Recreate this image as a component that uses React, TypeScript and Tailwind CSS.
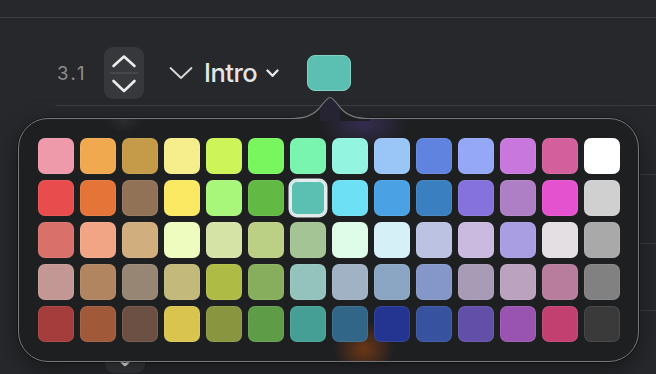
import React from 'react';

const SW: string[][] = [
  ['bg-[#ee9aaa]', 'bg-[#f0a94e]', 'bg-[#c59a48]', 'bg-[#f6ee8c]', 'bg-[#cdf55a]', 'bg-[#79f55e]', 'bg-[#7af5b0]', 'bg-[#93f5e0]', 'bg-[#99c6f7]', 'bg-[#5f83de]', 'bg-[#95a8f7]', 'bg-[#c877dd]', 'bg-[#d3609c]', 'bg-[#ffffff]'],
  ['bg-[#e84c4c]', 'bg-[#e47438]', 'bg-[#927257]', 'bg-[#fbe964]', 'bg-[#a8f67a]', 'bg-[#62b944]', 'bg-[#5bbfb2]', 'bg-[#6ee0f5]', 'bg-[#4aa2e4]', 'bg-[#3a7fbf]', 'bg-[#8672dc]', 'bg-[#ae7fc4]', 'bg-[#e552cf]', 'bg-[#d0d0d0]'],
  ['bg-[#d9706a]', 'bg-[#f2a585]', 'bg-[#d1ae7e]', 'bg-[#eefcbf]', 'bg-[#d6e3a7]', 'bg-[#bcd085]', 'bg-[#a4c496]', 'bg-[#defce8]', 'bg-[#d6f0f8]', 'bg-[#bbc2e2]', 'bg-[#cbbae0]', 'bg-[#a99ee2]', 'bg-[#e3dfe3]', 'bg-[#a9a9a9]'],
  ['bg-[#c39894]', 'bg-[#b0855f]', 'bg-[#978673]', 'bg-[#c2b97b]', 'bg-[#aebc45]', 'bg-[#86ae5c]', 'bg-[#94c3bd]', 'bg-[#a0b2c4]', 'bg-[#8ba6c3]', 'bg-[#8597c9]', 'bg-[#a79bb6]', 'bg-[#bba2bf]', 'bg-[#b87d9c]', 'bg-[#818181]'],
  ['bg-[#a43d3b]', 'bg-[#a05a3a]', 'bg-[#6c5044]', 'bg-[#d9c44f]', 'bg-[#8a953f]', 'bg-[#5e9c48]', 'bg-[#459f94]', 'bg-[#326689]', 'bg-[#233590]', 'bg-[#3753a0]', 'bg-[#6250a8]', 'bg-[#9954b2]', 'bg-[#c14070]', 'bg-[#3a3a3b]'],
];

function Stepper() {
  return (
    <div className="w-[40px] h-[52px] rounded-[9px] bg-[#36383b] shrink-0">
      <svg width="40" height="52" viewBox="0 0 40 52" fill="none">
        <polyline points="9.5,19 20,9.5 30.5,19" stroke="#ececec" strokeWidth="2.6" strokeLinecap="round" strokeLinejoin="round" />
        <line x1="6" y1="26" x2="34" y2="26" stroke="#55575b" strokeWidth="1" />
        <polyline points="9.5,34 20,44 30.5,34" stroke="#ececec" strokeWidth="2.6" strokeLinecap="round" strokeLinejoin="round" />
      </svg>
    </div>
  );
}

export default function App() {
  return (
    <div className="relative w-[656px] h-[374px] overflow-hidden bg-[#26282b] flex flex-col font-['Inter','Liberation_Sans',sans-serif]">
      <div className="h-[18px] shrink-0 border-b border-[#3a3c40]" />
      {/* header row */}
      <div className="ml-[56px] h-[88px] shrink-0 border-b border-[#3a3c40]">
        <div className="mt-[29px] h-[52px] flex items-center">
          <div className="w-[48px] pl-[1px] text-[18.5px] tracking-[2.6px] text-[#8d8e91] leading-none">3.1</div>
          <Stepper />
          <svg className="ml-[25px] shrink-0" width="24" height="14" viewBox="0 0 24 14" fill="none">
            <polyline points="1.5,2 12,12 22.5,2" stroke="#d9d9d9" strokeWidth="1.8" strokeLinecap="round" strokeLinejoin="round" />
          </svg>
          <div className="ml-[11px] w-[62px] text-[25.5px] tracking-[-0.5px] font-medium text-[#e4e4e5] leading-none">Intro</div>
          <svg className="shrink-0" width="13" height="9" viewBox="0 0 13 9" fill="none">
            <polyline points="1.5,1.5 6.5,6.8 11.5,1.5" stroke="#e6e6e6" strokeWidth="2.4" strokeLinecap="round" strokeLinejoin="round" />
          </svg>
          <div className="ml-[28px] w-[44px] h-[36px] rounded-[8px] bg-[#5bbfb1] border border-[#84d2c6]" />
        </div>
      </div>
      <div className="ml-[56px] h-[69px] shrink-0 border-b border-[#3a3c40]" />
      <div className="ml-[56px] h-[69px] shrink-0 border-b border-[#3a3c40]" />
      <div className="ml-[56px] h-[67px] shrink-0 border-b border-[#3a3c40]" />
      <div className="ml-[56px] flex-1">
        <div className="ml-[49px] mt-[10px]">
          <Stepper />
        </div>
      </div>

      {/* popover */}
      <div className="absolute left-[18px] top-[118px] w-[621px] h-[244px] rounded-[30px] border border-[#77787b] bg-[#1e1f21] shadow-[0_0_0_1px_rgba(0,0,0,0.35),0_8px_24px_rgba(0,0,0,0.4)] pl-[19px] pt-[19px]">
        <div className="absolute inset-0 rounded-[29px] overflow-hidden pointer-events-none">
          <div className="absolute left-[300px] top-[-20px] w-[90px] h-[50px] bg-[radial-gradient(ellipse_at_center,rgba(95,70,170,0.35),rgba(95,70,170,0)_70%)]" />
          <div className="absolute left-[312px] top-[200px] w-[66px] h-[60px] bg-[radial-gradient(ellipse_at_center,rgba(160,70,15,0.6),rgba(160,70,15,0)_65%)]" />
          <div className="absolute left-[85px] top-[-10px] w-[40px] h-[24px] bg-[radial-gradient(ellipse_at_center,rgba(255,255,255,0.06),rgba(255,255,255,0)_70%)]" />
        </div>
        <svg className="absolute left-[271px] top-[-23px]" width="80" height="25" viewBox="0 0 80 25" fill="none">
          <path d="M0 22.5 C14 22.5 22 20 29 12.5 C35 5 37.5 1.5 40 1.5 C42.5 1.5 45 5 51 12.5 C58 20 66 22.5 80 22.5 L80 25 L0 25 Z" fill="#1e1f21" />
          <path d="M0 22.5 C14 22.5 22 20 29 12.5 C35 5 37.5 1.5 40 1.5 C42.5 1.5 45 5 51 12.5 C58 20 66 22.5 80 22.5" stroke="#77787b" strokeWidth="1.2" fill="none" />
          <path d="M30 13 C36 5 38 2.5 40 2.5 C42 2.5 44 5 50 13 L50 25 L30 25 Z" fill="rgba(95,70,170,0.12)" />
        </svg>
        <div className="relative grid grid-cols-[repeat(14,36px)] gap-[6px]">
          {SW.map((row, r) =>
            row.map((c, i) => {
              const sel = r === 1 && i === 6;
              return (
                <div
                  key={r + '-' + i}
                  className={
                    'w-[36px] h-[36px] rounded-[7px] ' +
                    c +
                    (sel
                      ? ' shadow-[0_0_0_1.5px_#e3ecec,inset_0_0_0_2px_#e3ecec]'
                      : ' shadow-[inset_0_0_0_1px_rgba(255,255,255,0.08)]')
                  }
                />
              );
            })
          )}
        </div>
      </div>
    </div>
  );
}
